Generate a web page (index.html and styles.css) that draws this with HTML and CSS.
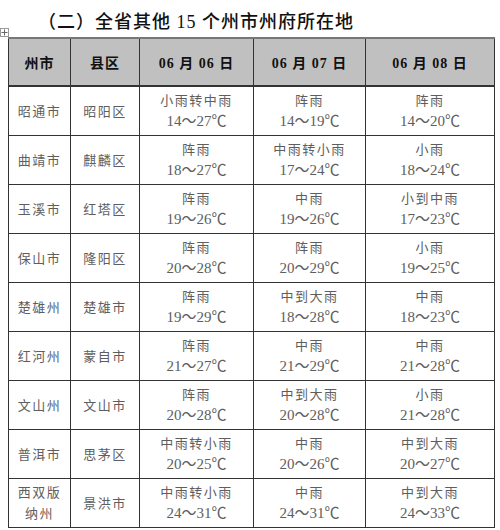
FILE: index.html
```html
<!DOCTYPE html>
<html lang="zh">
<head>
<meta charset="utf-8">
<link rel="stylesheet" href="styles.css">
</head>
<body>
<h2 class="title">（二）全省其他 15 个州市州府所在地</h2>
<div class="wrap">
<span class="handle"><svg width="9" height="9" viewBox="0 0 9 9"><rect x="0.5" y="0.5" width="8" height="8" fill="#fff" stroke="#999"/><path d="M4.5 1.5v6M1.5 4.5h6" stroke="#666" stroke-width="1"/></svg></span>
<table class="wx">
<colgroup><col class="c1"><col class="c2"><col class="c3"><col class="c4"><col class="c5"></colgroup>
<thead>
<tr><th>州市</th><th>县区</th><th>06 月 06 日</th><th>06 月 07 日</th><th>06 月 08 日</th></tr>
</thead>
<tbody>
<tr><td>昭通市</td><td>昭阳区</td><td>小雨转中雨<br><span class="t">14～27℃</span></td><td>阵雨<br><span class="t">14～19℃</span></td><td>阵雨<br><span class="t">14～20℃</span></td></tr>
<tr><td>曲靖市</td><td>麒麟区</td><td>阵雨<br><span class="t">18～27℃</span></td><td>中雨转小雨<br><span class="t">17～24℃</span></td><td>小雨<br><span class="t">18～24℃</span></td></tr>
<tr><td>玉溪市</td><td>红塔区</td><td>阵雨<br><span class="t">19～26℃</span></td><td>中雨<br><span class="t">19～26℃</span></td><td>小到中雨<br><span class="t">17～23℃</span></td></tr>
<tr><td>保山市</td><td>隆阳区</td><td>阵雨<br><span class="t">20～28℃</span></td><td>阵雨<br><span class="t">20～29℃</span></td><td>小雨<br><span class="t">19～25℃</span></td></tr>
<tr><td>楚雄州</td><td>楚雄市</td><td>阵雨<br><span class="t">19～29℃</span></td><td>中到大雨<br><span class="t">18～28℃</span></td><td>中雨<br><span class="t">18～23℃</span></td></tr>
<tr><td>红河州</td><td>蒙自市</td><td>阵雨<br><span class="t">21～27℃</span></td><td>中雨<br><span class="t">21～29℃</span></td><td>中雨<br><span class="t">21～28℃</span></td></tr>
<tr><td>文山州</td><td>文山市</td><td>阵雨<br><span class="t">20～28℃</span></td><td>中到大雨<br><span class="t">20～28℃</span></td><td>小雨<br><span class="t">21～28℃</span></td></tr>
<tr><td>普洱市</td><td>思茅区</td><td>中雨转小雨<br><span class="t">20～25℃</span></td><td>中雨<br><span class="t">20～26℃</span></td><td>中到大雨<br><span class="t">20～27℃</span></td></tr>
<tr><td>西双版<br>纳州</td><td>景洪市</td><td>中雨转小雨<br><span class="t">24～31℃</span></td><td>中雨<br><span class="t">24～31℃</span></td><td>中到大雨<br><span class="t">24～33℃</span></td></tr>
</tbody>
</table>
</div>
</body>
</html>
```
FILE: styles.css
```css
html, body {
  margin: 0;
  padding: 0;
  background: #fff;
}
body {
  width: 500px;
  height: 530px;
  overflow: hidden;
  font-family: "Liberation Serif", "Noto Sans CJK SC", serif;
}
.title {
  margin: 0;
  padding: 10px 0 0 38px;
  height: 27px;
  font-size: 18px;
  line-height: 24px;
  font-weight: 500;
  letter-spacing: 1px;
  color: #111;
  font-family: "Liberation Serif", "Noto Sans CJK SC", serif;
}
.wrap {
  position: relative;
  padding-left: 8px;
}
.handle {
  position: absolute;
  left: 0;
  top: -9px;
  line-height: 0;
}
.wx {
  border-collapse: collapse;
  table-layout: fixed;
  width: 486px;
  color: #5e5e5e;
}
.c1 { width: 62px; }
.c2 { width: 69px; }
.c3 { width: 114px; }
.c4 { width: 112px; }
.c5 { width: 129px; }
.wx th, .wx td {
  border: 1px solid #333;
  padding: 0;
  text-align: center;
  vertical-align: middle;
}
.wx th {
  background: #c0c0c0;
  color: #111;
  height: 46px;
  font-size: 14px;
  font-weight: bold;
  letter-spacing: 1px;
  border-bottom: 2px solid #333;
  border-top: 2px solid #777;
}
.wx td {
  height: 48px;
  font-size: 13px;
  line-height: 21px;
  letter-spacing: 1.5px;
}
.wx .t {
  font-size: 15px;
  letter-spacing: 0;
}
```
